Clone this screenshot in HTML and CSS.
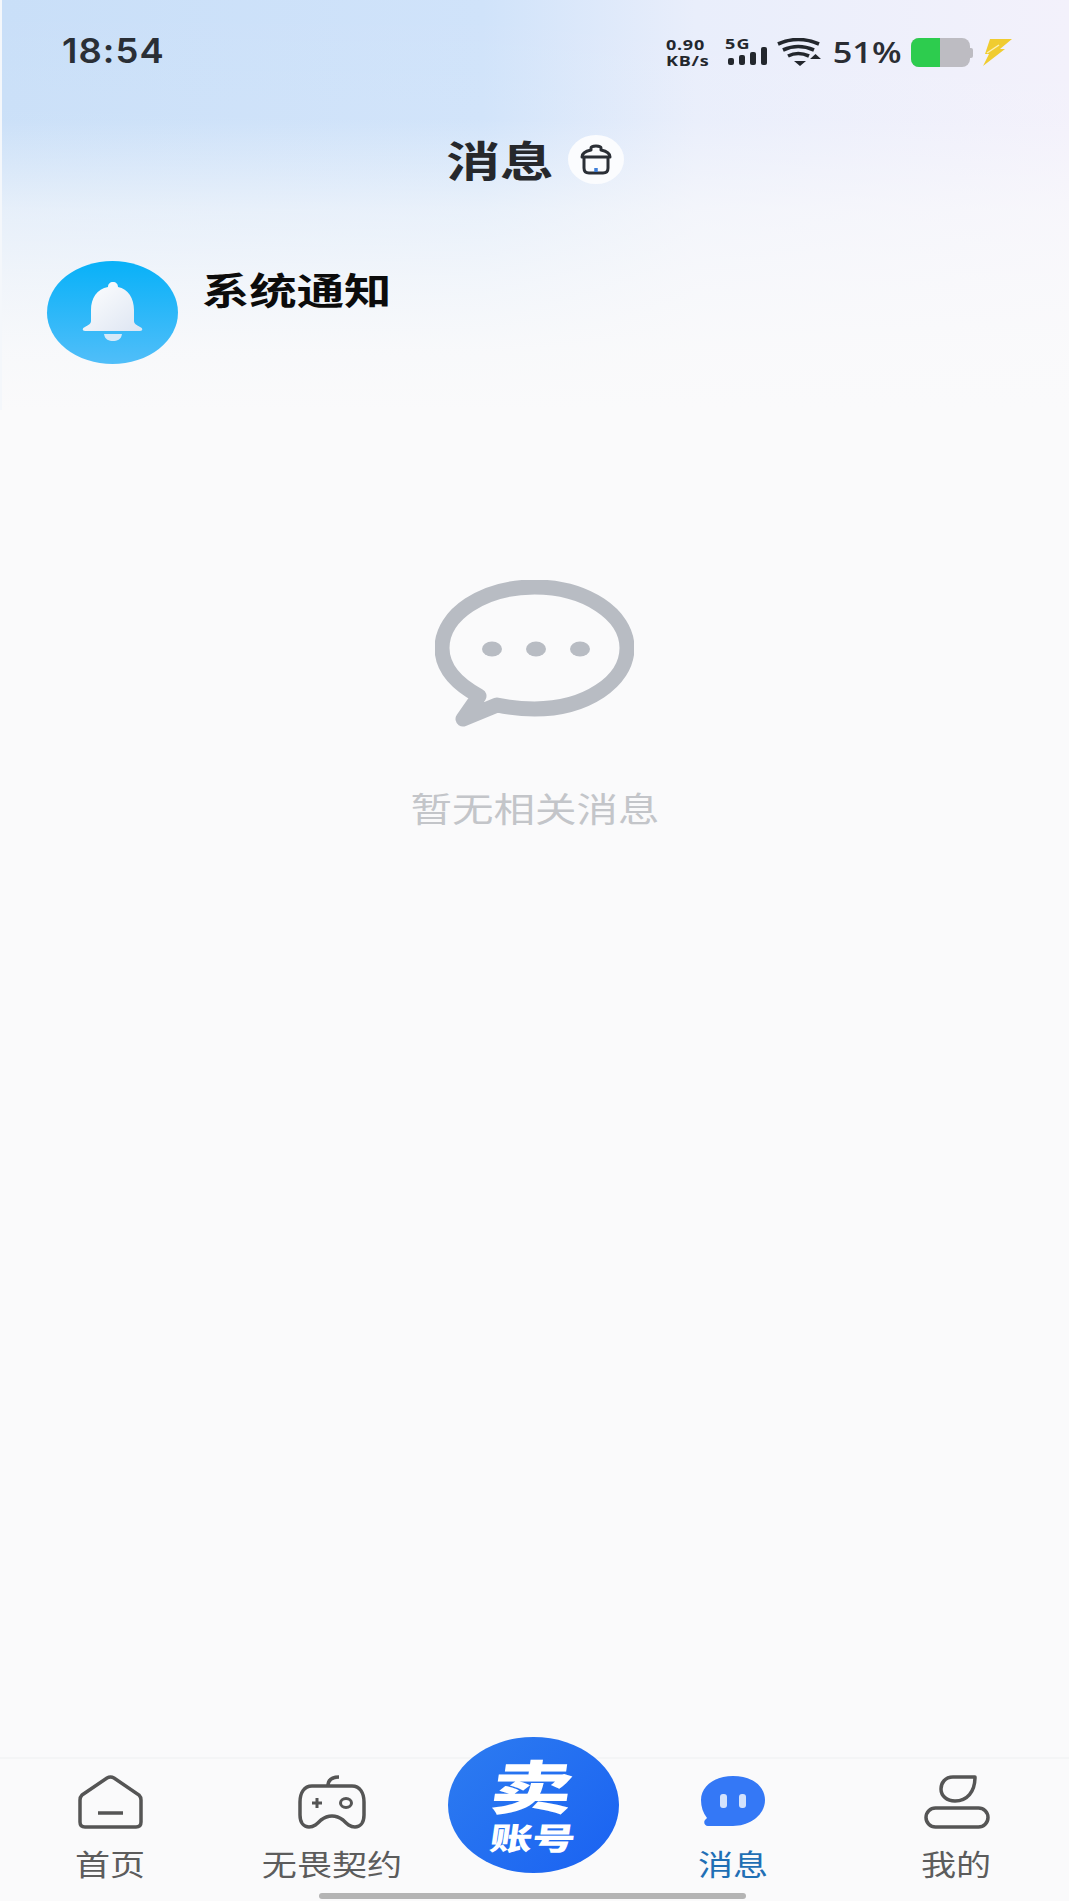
FILE: index.html
```html
<!DOCTYPE html>
<html lang="zh-CN">
<head>
  <meta charset="UTF-8" />
  <title>消息</title>
  <link rel="stylesheet" href="styles.css">
</head>
<body>
  <div class="page">
    <div class="hero">
      <div class="status-bar">
        <span class="time">18:54</span>
        <div class="status-right">
          <div class="net-speed"><span>0.90</span><span>KB/s</span></div>
          <div class="signal">
            <span class="signal-label">5G</span>
            <div class="bars">
              <i class="bar bar-1"></i><i class="bar bar-2"></i><i class="bar bar-3"></i><i class="bar bar-4"></i>
            </div>
          </div>
          <svg class="wifi" width="46" height="28" viewBox="0 0 46 28">
            <path d="M2 6Q22 -3 43 6M7 12Q22 5 38 12M12 18Q22 13 33 18" fill="none" stroke="#23272d" stroke-width="3.6"/>
            <path d="M18 23H30L24 28ZM34 21H45L39.500 16Z" fill="#23272d"/>
          </svg>
          <span class="battery-text"><span>51%</span></span>
          <div class="battery"><div class="battery-fill"></div></div>
          <svg class="bolt" width="30" height="27" viewBox="0 0 30 27">
            <path d="M8 0H30L18 10H23L1 27L7 15H3Z" fill="#f0cc30"/>
            <path d="M5 14L17 6" stroke="#fbf0b8" stroke-width="1.500"/>
          </svg>
        </div>
      </div>

      <div class="title-row">
        <h1 class="title"><span>消息</span></h1>
        <div class="title-badge">
          <svg width="32" height="31" viewBox="0 0 32 31">
            <path d="M4 13V24Q4 29 9 29H23Q28 29 28 24V13" fill="none" stroke="#2b2f36" stroke-width="3"/>
            <path d="M11 6C6 7 2 9 2 13H30C30 9 26 7 21 6V4Q21 2 16 2Q11 2 11 4Z" fill="none" stroke="#2b2f36" stroke-width="3" stroke-linejoin="round"/>
            <path d="M16 24V28" stroke="#3f7fd9" stroke-width="3.500"/>
          </svg>
        </div>
      </div>

      <div class="notice-row">
        <div class="notice-icon">
          <svg width="131" height="103" viewBox="0 -4 131 103">
            <defs>
              <linearGradient id="bell-fill" x1="0" y1="0" x2="1" y2="1">
                <stop offset="0" stop-color="#ffffff"/>
                <stop offset="1" stop-color="#dde5f2"/>
              </linearGradient>
            </defs>
            <path d="M66 17C69 17 71 19 71 22C81 24 87 33 87 45V56C87 59 90 60 93 62C96 63 96 66 93 66H38C35 66 35 63 38 62C41 60 44 59 44 56V45C44 33 50 24 61 22C61 19 63 17 66 17Z" fill="url(#bell-fill)"/>
            <path d="M57 69H75C74 75 70 76 66 76C62 76 58 75 57 69Z" fill="#d5e9f8"/>
          </svg>
        </div>
        <div class="notice-name"><span>系统通知</span></div>
      </div>
    </div>

    <div class="empty">
      <svg width="199" height="147" viewBox="0 0 199 147">
        <path d="M99.500 129C150.500 129 192 101.700 192 68C192 34.300 150.500 7 99.500 7C48.500 7 7 34.300 7 68C7 87 20 103 44 116L28 139L62 125C74 127.500 87 129 99.500 129Z" fill="none" stroke="#b8bcc3" stroke-width="15" stroke-linejoin="round"/>
        <ellipse cx="57" cy="69" rx="10" ry="7.500" fill="#b8bcc3"/>
        <ellipse cx="101" cy="69" rx="10" ry="7.500" fill="#b8bcc3"/>
        <ellipse cx="145" cy="69" rx="10" ry="7.500" fill="#b8bcc3"/>
      </svg>
      <div class="empty-text"><span>暂无相关消息</span></div>
    </div>

    <div class="tabbar">
      <div class="tab">
        <svg width="65" height="54" viewBox="0 0 65 54">
          <path d="M4 20L29 3Q32.500 1 36 3L61 20Q63 22 63 25V47Q63 52 58 52H7Q2 52 2 47V25Q2 22 4 20Z" fill="none" stroke="#555" stroke-width="3.500"/>
          <path d="M20 38H45" stroke="#555" stroke-width="3.500"/>
        </svg>
        <div class="tab-label"><span>首页</span></div>
      </div>
      <div class="tab">
        <svg width="68" height="54" viewBox="0 0 68 54">
          <path d="M14 11H54C62 11 66 18 66 27V40C66 48 62 52 57 52C52 52 49 49 45 45C41 42 38 41 34 41C30 41 27 42 23 45C19 49 16 52 11 52C6 52 2 48 2 40V27C2 18 6 11 14 11Z" fill="none" stroke="#555" stroke-width="3.500"/>
          <path d="M30 11C30 5 34 2 41 2" fill="none" stroke="#555" stroke-width="3.500"/>
          <path d="M14 28H24M19 23V33" stroke="#555" stroke-width="3"/>
          <ellipse cx="48" cy="28" rx="5.500" ry="4.500" fill="none" stroke="#555" stroke-width="3"/>
        </svg>
        <div class="tab-label"><span>无畏契约</span></div>
      </div>
      <div class="sell-cell">
        <div class="sell-button">
          <span class="sell-big">卖</span>
          <span class="sell-small">账号</span>
        </div>
      </div>
      <div class="tab tab-active">
        <svg width="66" height="54" viewBox="0 0 66 54">
          <path d="M33 1C52 1 65 11 65 25C65 40 50 51 33 51H8C4 51 3 46 6 44L7 43C3 38 1 32 1 25C1 11 15 1 33 1Z" fill="#3478f6"/>
          <rect x="20" y="19" width="7" height="14" rx="3" fill="#d3e2fc"/>
          <rect x="39" y="19" width="7" height="14" rx="3" fill="#d3e2fc"/>
        </svg>
        <div class="tab-label"><span>消息</span></div>
      </div>
      <div class="tab">
        <svg width="66" height="54" viewBox="0 0 66 54">
          <path d="M51 2H29C21 2 17 8 17 14C17 21 23 26 31 26C43 26 51 17 51 2Z" fill="none" stroke="#555" stroke-width="3.500" stroke-linejoin="round"/>
          <rect x="2" y="33" width="62" height="19" rx="9.500" fill="none" stroke="#555" stroke-width="3.500"/>
        </svg>
        <div class="tab-label"><span>我的</span></div>
      </div>
    </div>

    <div class="home-indicator"></div>
  </div>
</body>
</html>
```

FILE: styles.css
```css
/* ---------- base ---------- */
body {
  margin: 0;
  padding: 0;
  background-color: #fafafb;
  font-family: "Noto Sans CJK SC", "Noto Sans", sans-serif;
}
.page {
  position: relative;
  display: flex;
  flex-direction: column;
  height: 1901px;
  overflow: hidden;
}

/* ----- top area with the blue wash ----- */
.hero {
  box-sizing: border-box;
  height: 410px;
  border-left: 2px solid #f4f7fb;
  background:
    linear-gradient(to bottom,
      rgba(250, 250, 251, 0) 0,
      rgba(250, 250, 251, 0.05) 120px,
      rgba(250, 250, 251, 0.35) 170px,
      rgba(250, 250, 251, 0.6) 210px,
      rgba(250, 250, 251, 0.8) 280px,
      rgba(250, 250, 251, 0.95) 350px,
      #fafafb 410px),
    linear-gradient(to right, #c9dff8 0, #d0e3fa 45%, #e9eefb 65%, #f3f1fb 100%);
}

/* ----- status bar ----- */
.status-bar {
  box-sizing: border-box;
  display: flex;
  justify-content: space-between;
  height: 104px;
  padding: 36px 57px 0 60px;
}
.time {
  font-family: "Inter", sans-serif;
  font-size: 34px;
  line-height: 30px;
  font-weight: 600;
  letter-spacing: 1px;
  color: #2a2f36;
  transform: scaleX(1.07);
  transform-origin: left center;
}
.status-right {
  display: flex;
  align-items: flex-start;
  height: 32px;
}
.net-speed {
  display: flex;
  flex-direction: column;
  width: 46px;
  font-family: "Open Sans", sans-serif;
  font-size: 15px;
  line-height: 16px;
  font-weight: 700;
  color: #23272d;
  letter-spacing: 0.6px;
  white-space: nowrap;
}
.net-speed span {
  transform: scaleX(1.2);
  transform-origin: left center;
}
.signal {
  position: relative;
  width: 42px;
  height: 30px;
  margin-left: 13px;
}
.signal-label {
  position: absolute;
  left: 0;
  top: 0;
  font-family: "Open Sans", sans-serif;
  font-size: 15px;
  line-height: 15px;
  font-weight: 700;
  letter-spacing: 1px;
  color: #23272d;
  transform: scaleX(1.2);
  transform-origin: left center;
}
.bars {
  position: absolute;
  left: 3px;
  bottom: 1px;
  display: flex;
  align-items: flex-end;
  gap: 5px;
}
.bar {
  display: block;
  width: 6px;
  border-radius: 2px;
  background-color: #23272d;
}
.bar-1 { height: 7px; }
.bar-2 { height: 10px; }
.bar-3 { height: 13px; }
.bar-4 { height: 18px; }
.wifi {
  margin-left: 9px;
  margin-top: 2px;
}
.battery-text {
  width: 68px;
  margin-left: 11px;
  text-align: center;
  font-family: "Open Sans", sans-serif;
  font-size: 29px;
  line-height: 32px;
  font-weight: 600;
  color: #2a2d33;
  white-space: nowrap;
}
.battery-text span {
  display: inline-block;
  transform: scaleX(1.18);
}
.battery {
  position: relative;
  width: 59px;
  height: 29px;
  margin-left: 10px;
  margin-top: 2px;
  border-radius: 8px;
  background-color: #bdbcc2;
}
.battery::after {
  content: "";
  position: absolute;
  left: 100%;
  top: 10px;
  width: 3px;
  height: 10px;
  border-radius: 0 2px 2px 0;
  background-color: #bdbcc2;
}
.battery-fill {
  width: 29px;
  height: 100%;
  border-radius: 8px 0 0 8px;
  background-color: #2dcc4e;
}
.bolt {
  margin-left: 12px;
  margin-top: 3px;
}

/* ----- title ----- */
.title-row {
  display: flex;
  justify-content: center;
  align-items: center;
  gap: 14px;
  height: 50px;
  margin-top: 30px;
}
.title {
  width: 106px;
  margin: 0;
  text-align: center;
  font-size: 42px;
  line-height: 50px;
  font-weight: 700;
  color: #26282c;
}
.title span {
  display: inline-block;
  transform: scaleX(1.28);
}
.title-badge {
  display: flex;
  justify-content: center;
  align-items: center;
  width: 56px;
  height: 49px;
  border-radius: 50%;
  background-color: #fbfcfe;
}

/* ----- notice row ----- */
.notice-row {
  display: flex;
  align-items: flex-start;
  gap: 24px;
  margin-top: 77px;
  padding-left: 45px;
}
.notice-icon {
  width: 131px;
  height: 103px;
  border-radius: 50%;
  background: linear-gradient(to bottom, #08b1f8, #50bef9);
}
.notice-name {
  margin-top: 6px;
  font-size: 37px;
  line-height: 44px;
  font-weight: 700;
  color: #0c0c0c;
}
.notice-name span {
  display: inline-block;
  transform: scaleX(1.28);
  transform-origin: left center;
}

/* ----- empty state ----- */
.empty {
  flex: 1;
  display: flex;
  flex-direction: column;
  align-items: center;
  padding-top: 170px;
}
.empty-text {
  margin-top: 57px;
  font-size: 34px;
  line-height: 48px;
  color: #c3c5c9;
}
.empty-text span {
  display: inline-block;
  transform: scaleX(1.22);
}

/* ----- bottom tabs ----- */
.tabbar {
  display: grid;
  grid-template-columns: 220px 224px 178px 222px 225px;
  height: 144px;
  border-top: 2px solid #f4f5f6;
  box-sizing: border-box;
}
.tab {
  display: flex;
  flex-direction: column;
  align-items: center;
  padding-top: 16px;
}
.tab-label {
  margin-top: 16px;
  font-size: 29px;
  line-height: 36px;
  color: #5c5c5c;
}
.tab-label span {
  display: inline-block;
  transform: scaleX(1.21);
}
.tab-active .tab-label {
  color: #1f6fb5;
}
.sell-cell {
  display: flex;
  justify-content: center;
}
.sell-button {
  display: flex;
  flex-direction: column;
  align-items: center;
  flex-shrink: 0;
  width: 171px;
  height: 136px;
  margin-top: -22px;
  border-radius: 50%;
  background: linear-gradient(135deg, #2d7cf0, #1a62f2);
  color: #fff;
  font-weight: 900;
}
.sell-big {
  margin-top: 14px;
  font-size: 58px;
  line-height: 66px;
  transform: scaleX(1.42) skewX(-6deg);
}
.sell-small {
  margin-top: 1px;
  font-size: 31px;
  line-height: 38px;
  transform: scaleX(1.38) skewX(-6deg);
}
.home-indicator {
  position: absolute;
  left: 319px;
  bottom: 2px;
  width: 427px;
  height: 6px;
  border-radius: 3px;
  background-color: #b4b4b4;
}
```
